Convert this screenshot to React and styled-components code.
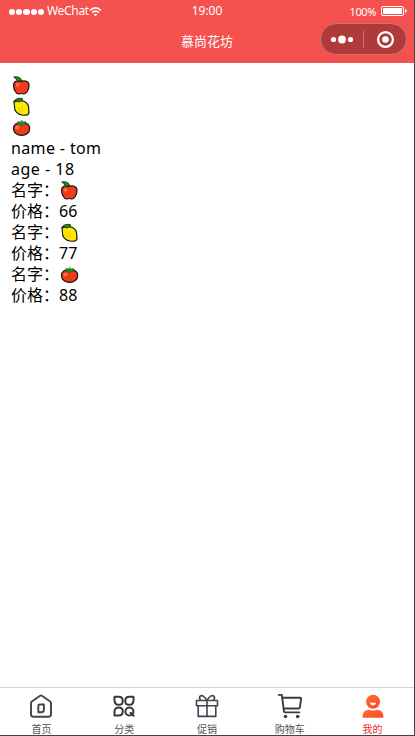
import React from 'react';
import styled, { createGlobalStyle } from 'styled-components';

const GlobalStyle = createGlobalStyle`
  * { box-sizing: border-box; }
  body { margin: 0; background: #fff; }
`;

const Screen = styled.div`
  width: 415px;
  height: 736px;
  display: flex;
  flex-direction: column;
  overflow: hidden;
  background: #fff;
  border-right: 1px solid #424242;
  border-bottom: 1px solid #424242;
  font-family: 'Noto Sans', 'Noto Sans CJK SC', sans-serif;
`;

const Header = styled.header`
  height: 63px;
  flex: none;
  background: #f5514f;
  color: #fff;
`;

const StatusBar = styled.div`
  height: 20px;
  display: grid;
  grid-template-columns: 1fr auto 1fr;
  align-items: center;
  padding: 0 7px 0 9px;
  font-size: 12px;
  line-height: 20px;
`;

const Carrier = styled.div`
  display: flex;
  align-items: center;
  letter-spacing: -0.3px;
`;

const Signal = styled.div`
  display: flex;
  gap: 1px;
  margin: 2px 3px 0 0;
`;

const SignalDot = styled.i`
  width: 6.2px;
  height: 6px;
  border-radius: 50%;
  background: #fff;
`;

const Clock = styled.div`
  margin-right: 2px;
  letter-spacing: 0;
`;

const Power = styled.div`
  display: flex;
  align-items: center;
  justify-content: flex-end;
  gap: 5px;
  padding-top: 2px;
  font-size: 11px;
  letter-spacing: -0.4px;

  svg { margin-bottom: 2px; }
`;

const NavBar = styled.div`
  height: 43px;
  display: grid;
  grid-template-columns: 1fr auto 1fr;
  align-items: center;
  padding: 0 7px 5px 7px;
`;

const Title = styled.h1`
  grid-column: 2;
  margin: 4px 0 0;
  font-size: 13px;
  line-height: 17px;
  font-weight: 400;
`;

const Capsule = styled.div`
  justify-self: end;
  width: 87px;
  height: 32px;
  border: 1px solid #cf7371;
  border-radius: 16px;
  background: #b03a39;
  display: flex;
  align-items: center;
`;

const Content = styled.main`
  flex: 1;
  padding: 12px 11px;
  font-size: 16px;
  color: #000;
`;

const Line = styled.div`
  height: 21.05px;
  line-height: 21px;
  display: flex;
  align-items: center;
  white-space: pre;
  letter-spacing: ${(p) => p.$spacing || 0};
`;

const TabBar = styled.nav`
  flex: none;
  height: 48px;
  border-top: 1px solid #d2d2d2;
  display: grid;
  grid-template-columns: repeat(5, 1fr);
`;

const Tab = styled.div`
  display: flex;
  flex-direction: column;
  align-items: center;
  padding-top: 5px;
  font-size: 10px;
  line-height: 14px;
  color: ${(p) => (p.$active ? '#f5302c' : '#555')};

  svg { display: block; flex: none; margin-bottom: 1px; }
  span { white-space: nowrap; }
`;

const Fruit = styled.svg`
  display: block;
  width: 21px;
  height: 21px;
  margin-top: 1px;
  flex: none;
`;

const Apple = () => (
  <Fruit viewBox="0 0 21 21" stroke="#16140f" strokeWidth="1.2" strokeLinejoin="round">
    <path d="M9.8 5.6C7.5 4.3 2.7 4.6 2.6 9.2c0 4.2 2.5 8.8 5.2 8.8 1 0 1.3-.5 2.4-.5s1.6.5 2.5.5c2.5 0 5.3-4.5 5.3-8.8 0-4.3-4.8-5.1-8.2-3.6Z" fill="#f23b19" />
    <path d="M2.7 1c3-.4 7.1-.4 8.1 3.9-3.4.7-5.5-.2-6-2.4Z" fill="#159018" strokeWidth=".8" />
    <circle cx="6.7" cy="9" r="1.8" fill="#ff7458" stroke="none" />
  </Fruit>
);

const Lemon = () => (
  <Fruit viewBox="0 0 21 21" stroke="#16140f" strokeWidth="1.1" strokeLinejoin="round">
    <path d="M3 5.2c2-1.4 7-2.3 10.5-.8 3.7 1.7 4.5 4.4 4.2 8.3.4 1.5.2 4.2-.8 4.9-2.1.6-4.1.8-6 .4C6.5 17.3 3 13.7 3.5 9.5Z" fill="#ffe600" />
    <path d="M2.5 4.5C5.5 1 8.1 1.1 11.5 1.6c.4 2.2-3.3 4.2-6.2 2.4Z" fill="#159018" strokeWidth=".8" />
    <path d="M7.5 11h1m2 0h1m-4 2.5h1m2 0h1" stroke="#b5a500" strokeWidth=".9" />
  </Fruit>
);

const Tomato = () => (
  <Fruit viewBox="0 0 21 21" strokeLinejoin="round">
    <path d="M10.7 4.7c5-.5 8 2 8 5.9 0 4.2-3.8 6.7-8.1 6.7S2.5 14.8 2.5 10.6c0-3.8 3.2-6.3 8.2-5.9Z" fill="#f23b19" stroke="#16140f" strokeWidth="1.2" />
    <path d="M10.7 2.2l.9 1.8 3.1-.6-.9 1.7 1.5 1.5-2.7-.3-1.8 2-1.9-2-2.8.4 1.6-1.7-1.2-1.5 3.4.4Z" fill="#159018" stroke="#126b14" strokeWidth=".5" />
    <circle cx="6.3" cy="9.6" r="1.8" fill="#ff7458" />
  </Fruit>
);

const WifiIcon = () => (
  <svg width="13" height="11" viewBox="0 0 13 11" fill="none" stroke="#fff" strokeWidth="1.5">
    <path d="M1 4.4Q6.5-.7 12 4.4M3.1 6.6q3.4-3 6.8 0" />
    <path d="M4.6 8.3q1.9-1.3 3.8 0L6.5 10.3Z" fill="#fff" stroke="none" />
  </svg>
);

const BatteryIcon = () => (
  <svg width="26" height="10" viewBox="0 0 26 10">
    <rect x=".5" y=".5" width="22" height="9" rx="1.5" fill="none" stroke="#fff" />
    <rect x="2" y="2" width="19" height="6" rx=".5" fill="#fff" />
    <path d="M24 3q1.8.3 1.8 2T24 7Z" fill="#fff" />
  </svg>
);

const CapsuleIcons = () => (
  <svg width="85" height="30" viewBox="0 0 85 30">
    <g fill="#fff">
      <circle cx="12.5" cy="15.5" r="2.6" />
      <circle cx="21" cy="15.5" r="3.9" />
      <circle cx="29.5" cy="15.5" r="2.6" />
      <circle cx="64.5" cy="15.5" r="3.3" />
    </g>
    <path d="M42.5 7v17" stroke="#cf7371" />
    <circle cx="64.5" cy="15.5" r="7.4" fill="none" stroke="#fff" strokeWidth="2.3" />
  </svg>
);

const HomeIcon = () => (
  <svg width="26" height="28" viewBox="0 0 26 28" fill="none" stroke="#444348" strokeWidth="1.9" strokeLinejoin="round">
    <path d="M12.1 2.8Q13 2.2 13.9 2.8L22.2 8.5Q23 9 23 10V21.2Q23 23.8 20.4 23.8H5.6Q3 23.8 3 21.2V10Q3 9 3.8 8.5Z" />
    <path d="M11.8 11.5h4.1v5.3q0 2.4-2.5 2.4h-3.1v-5.3q0-2.4 1.5-2.4Z" />
  </svg>
);

const CategoryIcon = () => (
  <svg width="26" height="28" viewBox="0 0 26 28" fill="none" stroke="#37363a" strokeWidth="2" strokeLinejoin="round" strokeLinecap="round">
    <path d="M3.5 3.8h4.2q4 0 4 4v.4q0 3.6-3.9 3.6t-4.3-4Z" />
    <path d="M22.5 3.8h-4.2q-4 0-4 4v.4q0 3.6 3.9 3.6t4.3-4Z" />
    <path d="M3.5 22.5h4.2q4 0 4-4v-.4q0-3.6-3.9-3.6t-4.3 4Z" />
    <circle cx="18.4" cy="18.5" r="4" />
    <path d="M19.6 19.7l3 3" />
  </svg>
);

const GiftIcon = () => (
  <svg width="26" height="28" viewBox="0 0 26 28" fill="none" stroke="#454351" strokeWidth="1.6" strokeLinejoin="round">
    <rect x="2.5" y="7.5" width="21" height="5.2" />
    <path d="M4.2 12.7v10.7h17.6V12.7M13 7.5v15.9M13 7.4Q9 1.1 6.2 3.1 4.6 4.7 6.5 7.3M13 7.4q4-6.3 6.8-4.3 1.6 1.6-.3 4.2" />
  </svg>
);

const CartIcon = () => (
  <svg width="26" height="28" viewBox="0 0 26 28" fill="none" stroke="#3c3c3e" strokeWidth="1.9" strokeLinejoin="round" strokeLinecap="round">
    <path d="M1.7 1.9h3.1L7 18.3q.2 1.1 1.3 1.1h14M5.4 4.8H23.2q1 0 .8 1.2l-1.1 8.3q-.2 1.2-1.4 1.2H7" />
    <circle cx="8.5" cy="23.5" r="1.8" fill="#3c3c3e" stroke="none" />
    <circle cx="20.7" cy="23.5" r="1.8" fill="#3c3c3e" stroke="none" />
  </svg>
);

const UserIcon = () => (
  <svg width="26" height="28" viewBox="0 0 26 28">
    <defs>
      <linearGradient id="warm" x1="0" y1="0" x2="1" y2="1">
        <stop offset="0" stopColor="#ff7134" />
        <stop offset="1" stopColor="#ff4327" />
      </linearGradient>
    </defs>
    <circle cx="13" cy="8.8" r="7" fill="url(#warm)" />
    <path d="M9.8 9.8h6.4q-.5 2.6-3.2 2.6T9.8 9.8Z" fill="#fff" />
    <path d="M2.6 24.7v-1.4Q2.8 17.4 8.2 16.8q4.8 1.2 9.6 0 5.4.6 5.6 6.5v1.4Z" fill="url(#warm)" />
  </svg>
);

const fruits = [
  { Icon: Apple, price: 66 },
  { Icon: Lemon, price: 77 },
  { Icon: Tomato, price: 88 },
];

const tabs = [
  { label: '首页', Icon: HomeIcon },
  { label: '分类', Icon: CategoryIcon },
  { label: '促销', Icon: GiftIcon },
  { label: '购物车', Icon: CartIcon },
  { label: '我的', Icon: UserIcon, active: true },
];

export default function App() {
  return (
    <>
      <GlobalStyle />
      <Screen>
        <Header>
          <StatusBar>
            <Carrier>
              <Signal>{[0, 1, 2, 3, 4].map((n) => <SignalDot key={n} />)}</Signal>
              <span>WeChat</span>
              <WifiIcon />
            </Carrier>
            <Clock>19:00</Clock>
            <Power><span>100%</span><BatteryIcon /></Power>
          </StatusBar>
          <NavBar>
            <Title>慕尚花坊</Title>
            <Capsule><CapsuleIcons /></Capsule>
          </NavBar>
        </Header>
        <Content>
          {fruits.map(({ Icon, price }) => <Line key={price}><Icon /></Line>)}
          <Line $spacing="0.37px">name - tom</Line>
          <Line $spacing="0.5px">age - 18</Line>
          {fruits.map(({ Icon, price }) => (
            <React.Fragment key={price}>
              <Line>名字：<Icon /></Line>
              <Line>价格：{price}</Line>
            </React.Fragment>
          ))}
        </Content>
        <TabBar>
          {tabs.map(({ label, Icon, active }) => (
            <Tab key={label} $active={active}><Icon /><span>{label}</span></Tab>
          ))}
        </TabBar>
      </Screen>
    </>
  );
}
